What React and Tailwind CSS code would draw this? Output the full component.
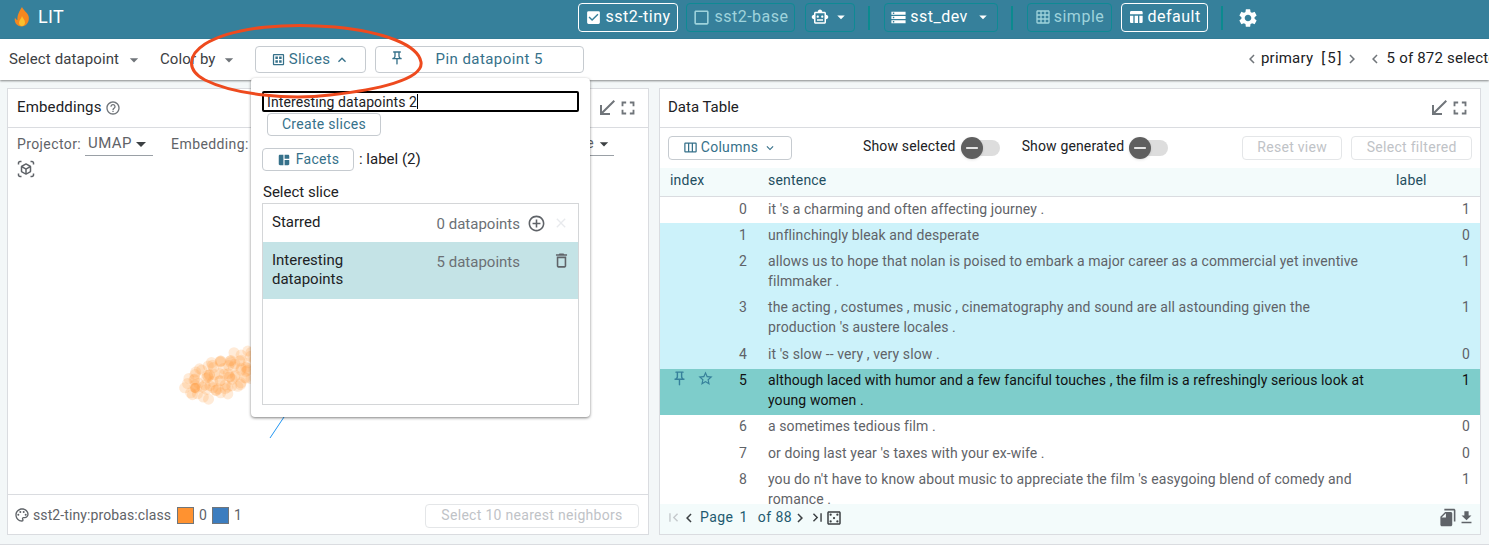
import {
  MdCheckBox, MdCheckBoxOutlineBlank, MdOutlineSmartToy, MdStorage, MdGridOn, MdTableChart, MdSettings,
  MdArrowDropDown, MdExpandLess, MdExpandMore, MdOutlineDataset, MdOutlinePushPin, MdSpaceDashboard,
  MdOutlineViewWeek, MdAddCircleOutline, MdOutlineDelete, MdClose, MdHelpOutline, MdSouthWest, MdFullscreen,
  MdOutlineViewInAr, MdOutlinePalette, MdOutlineCasino, MdFirstPage, MdLastPage, MdChevronLeft, MdChevronRight,
  MdFileCopy, MdFileDownload, MdStarBorder, MdRemove,
} from 'react-icons/md';

const rows = [
  { i: 0, text: "it 's a charming and often affecting journey .", label: 1, h: 'h-[26px] pt-[2px]', bg: 'bg-white' },
  { i: 1, text: 'unflinchingly bleak and desperate', label: 0, h: 'h-[26px] pt-[2px]', bg: 'bg-[#ccf2fa]' },
  { i: 2, text: 'allows us to hope that nolan is poised to embark a major career as a commercial yet inventive filmmaker .', label: 1, h: 'h-[46px] pt-[2px]', bg: 'bg-[#ccf2fa]' },
  { i: 3, text: "the acting , costumes , music , cinematography and sound are all astounding given the production 's austere locales .", label: 1, h: 'h-[47px] pt-[2px]', bg: 'bg-[#ccf2fa]' },
  { i: 4, text: "it 's slow -- very , very slow .", label: 0, h: 'h-[27px] pt-[2px]', bg: 'bg-[#ccf2fa]' },
  { i: 5, text: 'although laced with humor and a few fanciful touches , the film is a refreshingly serious look at young women .', label: 1, h: 'h-[46px] pt-px', bg: 'bg-[#7ecdcb]', primary: true },
  { i: 6, text: 'a sometimes tedious film .', label: 0, h: 'h-[27px] pt-px', bg: 'bg-white' },
  { i: 7, text: "or doing last year 's taxes with your ex-wife .", label: 0, h: 'h-[26px] pt-px', bg: 'bg-white' },
  { i: 8, text: "you do n't have to know about music to appreciate the film 's easygoing blend of comedy and romance .", label: 1, h: 'h-[46px] pt-px', bg: 'bg-white' },
];

// orange blob of the projection, fixed pseudo random points
const dots = Array.from({ length: 90 }, (_, n) => {
  const a = (n * 137.5 * Math.PI) / 180;
  const r = Math.sqrt((n + 1) / 90);
  const ex = Math.cos(a) * r * 40 + Math.sin(n * 3.1) * 3;
  const ey = Math.sin(a) * r * 19 + Math.sin(n * 7.3) * 3;
  return { x: 224 + ex, y: 375 + ey - ex * 0.3 };
});

function HeaderBtn({ active, className = '', children }) {
  return (
    <div className={`h-[29px] flex items-center justify-center rounded-[4px] border text-[16px] tracking-[0.5px] pb-px ${active ? 'border-white text-white' : 'border-[#0e8a94] text-[#9fd3dc]'} ${className}`}>
      {children}
    </div>
  );
}

function Sep({ className = '' }) {
  return <div className={`w-[2px] h-[24px] bg-[#0b8a8f] ${className}`} />;
}

function OutlineBtn({ className = '', children }) {
  return (
    <div className={`flex items-center justify-center rounded-[4px] border border-[#c6cbd0] bg-white text-[#36718a] tracking-[0.3px] ${className}`}>
      {children}
    </div>
  );
}

function DisabledBtn({ className = '', children }) {
  return (
    <div className={`h-[24px] flex items-center justify-center rounded-[4px] border border-[#e4e6e8] text-[14px] tracking-[0.3px] text-[#bfc3c7] pb-px ${className}`}>
      {children}
    </div>
  );
}

function Toggle({ className = '' }) {
  return (
    <div className={`relative w-[39px] h-[16px] rounded-full bg-[#dddddd] ${className}`}>
      <div className="absolute left-0 -top-[3px] w-[22px] h-[22px] rounded-full bg-[#5f5f5f] shadow flex items-center justify-center">
        <MdRemove className="text-white" size={20} />
      </div>
    </div>
  );
}

function PanelHeader({ children }) {
  return (
    <div className="h-[39px] shrink-0 flex items-center border-b border-[#dadce0] pl-[9px] pr-[9px] pb-px">
      {children}
      <div className="ml-auto flex items-center text-[#70757a]">
        <MdSouthWest size={24} />
        <MdFullscreen size={22} className="-ml-[2px]" />
      </div>
    </div>
  );
}

function SliceRow({ name, count, selected, className = '', children }) {
  return (
    <div className={`flex text-[15px] ${selected ? 'bg-[#c4e3e6]' : ''} ${className}`}>
      <div className="w-[120px] pl-[9px] pt-[9px] leading-[19px] text-[#202124]">{name}</div>
      <div className="w-[137px] text-right text-[#6b7075] pt-[11px] leading-[19px]">{count}</div>
      {children}
    </div>
  );
}

export default function App() {
  return (
    <div className="relative w-[1489px] h-[547px] overflow-hidden bg-white font-['Roboto',sans-serif] text-[14px] text-[#202124]">
      {/* Top bar */}
      <div className="h-[39px] bg-[#36809b] flex items-center">
        <div className="flex items-center w-[578px] pl-[13px] pb-[6px] text-white text-[18px] tracking-[0.3px]">
          <svg width="18" height="20" viewBox="0 0 18 20" className="mr-[7px]">
            <path d="M9 0c1 3 5 5 6.500 9 1.300 4-.8 10-6.500 10.500C3.500 19.500.8 15 2 10.500c.5 1.500 1.500 2.200 2.500 2.500C4 8 6.500 4 9 0z" fill="#f5871f" />
            <path d="M9 9c.5 2 3 3.500 3 6.500 0 2-1.300 3.500-3 3.500s-3.200-1.300-3-3.500C6.200 13 8.500 11.500 9 9z" fill="#fbc02d" />
          </svg>
          LIT
        </div>
        <div className="flex items-center pb-[4px]">
          <HeaderBtn active className="w-[100px] gap-[3px]"><MdCheckBox size={17} />sst2-tiny</HeaderBtn>
          <HeaderBtn className="w-[109px] ml-[8px] gap-[3px]"><MdCheckBoxOutlineBlank size={19} />sst2-base</HeaderBtn>
          <HeaderBtn className="w-[50px] ml-[10px] text-white gap-[3px]"><MdOutlineSmartToy size={18} className="text-white" /><MdArrowDropDown size={18} className="text-white" /></HeaderBtn>
          <Sep className="ml-[13px]" />
          <HeaderBtn className="w-[114px] ml-[14px] gap-[3px] !text-white"><MdStorage size={17} />sst_dev<MdArrowDropDown size={18} className="ml-[3px]" /></HeaderBtn>
          <Sep className="ml-[13px]" />
          <HeaderBtn className="w-[85px] ml-[14px] gap-[3px]"><MdGridOn size={16} />simple</HeaderBtn>
          <HeaderBtn active className="w-[87px] ml-[9px] gap-[3px]"><MdTableChart size={16} />default</HeaderBtn>
          <Sep className="ml-[13px]" />
          <MdSettings size={22} className="ml-[14px] text-white" />
        </div>
      </div>

      {/* Toolbar */}
      <div className="relative z-10 h-[41px] bg-white flex items-center shadow-[0_1px_2px_rgba(0,0,0,0.45)] text-[15px] tracking-[0.1px] text-[#3c4043] whitespace-nowrap">
        <div className="flex items-center w-[160px] pl-[9px] shrink-0">Select datapoint<MdArrowDropDown size={20} className="ml-[5px] text-[#70757a]" /></div>
        <div className="flex items-center w-[95px] shrink-0">Color by<MdArrowDropDown size={20} className="ml-[3px] text-[#70757a]" /></div>
        <OutlineBtn className="w-[111px] h-[27px] gap-[3px] text-[15px] shrink-0"><MdOutlineDataset size={15} />Slices<MdExpandLess size={16} className="ml-[1px]" /></OutlineBtn>
        <OutlineBtn className="w-[209px] h-[27px] ml-[9px] text-[15px] shrink-0">
          <MdOutlinePushPin size={16} className="ml-[13px] -mt-[4px]" />
          <span className="ml-auto mr-[40px] tracking-[0.45px]">Pin datapoint 5</span>
        </OutlineBtn>
        <div className="ml-[659px] flex items-center text-[#202124] text-[15px] tracking-[0.2px] -mt-[2px]">
          <MdChevronLeft size={18} className="text-[#70757a]" />
          <span>primary</span>
          <span className="ml-[8px] tracking-[2px]">[5]</span>
          <MdChevronRight size={18} className="-ml-[1px] text-[#70757a]" />
          <MdChevronLeft size={18} className="ml-[5px] text-[#70757a]" />
          <span className="ml-[3px]">5 of 872 selected</span>
        </div>
      </div>

      {/* Panels */}
      <div className="h-[465px] bg-[#f3f7f8] border-b border-[#dadce0] flex gap-[10px] pl-[7px] pt-[8px] pb-[9px]">
        <div className="w-[642px] bg-white border border-[#dadce0] flex flex-col">
          <PanelHeader>
            <span className="text-[15px] tracking-[0.15px]">Embeddings</span>
            <MdHelpOutline size={16} className="ml-[3px] mt-[1px] text-[#70757a]" />
          </PanelHeader>
          <div className="relative flex-1 min-h-0">
            <svg className="absolute left-0 top-0" width="640" height="367" viewBox="8 128 640 367">
              {dots.map((d, n) => <circle key={n} cx={d.x} cy={d.y} r="5.500" fill="#ff9a3c" fillOpacity="0.2" />)}
              <circle cx="195" cy="388" r="5" fill="#ff9a3c" fillOpacity="0.5" />
              <line x1="284" y1="417" x2="270" y2="438" stroke="#2196f3" strokeWidth="1" />
            </svg>
            <div className="relative flex items-center h-[32px] pl-[9px] text-[14px] tracking-[0.4px] text-[#5f6368]">
              <span>Projector:</span>
              <div className="ml-[4px] w-[68px] h-[24px] border-b border-[#9aa0a6] flex items-center pl-[3px] text-[15px]">UMAP<MdArrowDropDown size={24} className="-ml-[3px] text-[#3c4043]" /></div>
              <span className="ml-[18px]">Embedding:</span>
              <div className="ml-auto mr-[34px] w-[30px] h-[24px] border-b border-[#9aa0a6] flex items-center justify-end">e<MdArrowDropDown size={20} className="text-[#3c4043]" /></div>
            </div>
            <MdOutlineViewInAr size={18} className="relative ml-[9px] text-[#5f6368]" />
          </div>
          <div className="h-[40px] shrink-0 border-t border-[#dadce0] flex items-center pl-[6px] pr-[9px] pt-px text-[14px] tracking-[0.1px] text-[#5f6368]">
            <MdOutlinePalette size={16} />
            <span className="ml-[3px]">sst2-tiny:probas:class</span>
            <div className="ml-[6px] w-[17px] h-[17px] bg-[#ff9230] border border-[#70757a]" />
            <span className="ml-[5px]">0</span>
            <div className="ml-[5px] w-[17px] h-[17px] bg-[#3c7dbf] border border-[#70757a]" />
            <span className="ml-[5px]">1</span>
            <DisabledBtn className="ml-auto w-[214px] mt-px">Select 10 nearest neighbors</DisabledBtn>
          </div>
        </div>

        <div className="w-[822px] bg-white border border-[#dadce0] flex flex-col">
          <PanelHeader>
            <span className="text-[15px] -ml-px">Data Table</span>
          </PanelHeader>
          <div className="h-[40px] shrink-0 flex items-center pl-[8px] tracking-[0.15px]">
            <OutlineBtn className="w-[124px] h-[24px] gap-[3px] text-[14px] pb-px"><MdOutlineViewWeek size={15} />Columns<MdExpandMore size={14} className="ml-[2px]" /></OutlineBtn>
            <span className="ml-[71px] -mt-[3px]">Show selected</span>
            <Toggle className="ml-[5px]" />
            <span className="ml-[22px] -mt-[3px]">Show generated</span>
            <Toggle className="ml-[5px]" />
            <DisabledBtn className="ml-[74px] w-[100px]">Reset view</DisabledBtn>
            <DisabledBtn className="ml-[9px] w-[121px]">Select filtered</DisabledBtn>
          </div>
          <div className="h-[29px] shrink-0 bg-[#f3fbfb] border-b border-[#dadce0] flex items-center text-[#1f4e60] tracking-[0.2px] pb-[3px]">
            <span className="ml-[10px] w-[98px]">index</span>
            <span className="w-[628px]">sentence</span>
            <span>label</span>
          </div>
          <div className="flex-1 min-h-0 overflow-hidden">
            {rows.map((r) => (
              <div key={r.i} className={`flex ${r.h} ${r.bg} ${r.primary ? 'text-[#111111]' : 'text-[#5f6368]'} leading-[20px] tracking-[0.1px]`}>
                <div className="w-[87px] shrink-0 flex items-start justify-end relative">
                  {r.primary && (
                    <div className="absolute left-[11px] top-0 flex gap-[9px] text-[#36809b]">
                      <MdOutlinePushPin size={17} />
                      <MdStarBorder size={17} />
                    </div>
                  )}
                  {r.i}
                </div>
                <div className="w-[608px] ml-[21px] shrink-0">{r.text}</div>
                <div className="w-[94px] shrink-0 text-right">{r.label}</div>
              </div>
            ))}
          </div>
          <div className="h-[30px] shrink-0 bg-[#f3fbfb] flex items-center pl-[5px] pr-[5px] pb-[3px] text-[#1f5a70] text-[14px] tracking-[0.45px]">
            <MdFirstPage size={17} className="text-[#c5cacd]" />
            <MdChevronLeft size={18} className="-ml-[2px] text-[#3c4043]" />
            <span className="ml-[2px]">Page</span>
            <span className="ml-[6px]">1</span>
            <span className="ml-[10px]">of 88</span>
            <MdChevronRight size={18} className="-ml-px text-[#3c4043]" />
            <MdLastPage size={17} className="text-[#3c4043]" />
            <MdOutlineCasino size={18} className="-ml-px text-[#3c4043]" />
            <MdFileCopy size={19} className="ml-auto text-[#5f6368] scale-x-[-1]" />
            <MdFileDownload size={17} className="ml-[1px] text-[#5f6368]" />
          </div>
        </div>
      </div>

      {/* Slices popup */}
      <div className="absolute z-20 left-[251px] top-[78px] w-[339px] h-[339px] bg-white rounded-[4px] shadow-[0_1px_3px_rgba(0,0,0,0.5)] pl-[11px] pr-[11px] pt-[13px]">
        <div className="h-[21px] border-2 border-black rounded-[2px] flex items-center pl-[3px] text-[14px] tracking-[0.1px] text-[#202124] leading-none">
          Interesting datapoints 2<span className="w-px h-[15px] bg-black" />
        </div>
        <OutlineBtn className="ml-[5px] mt-px w-[114px] h-[23px] text-[14px]">Create slices</OutlineBtn>
        <div className="mt-[12px] flex items-center">
          <OutlineBtn className="w-[92px] h-[23px] gap-[5px] text-[14px]"><MdSpaceDashboard size={14} />Facets</OutlineBtn>
          <span className="ml-[5px] text-[15px]">: label (2)</span>
        </div>
        <div className="mt-[12px] pl-px leading-[18px] text-[15px]">Select slice</div>
        <div className="mt-[2px] h-[202px] border border-[#d4d6d8]">
          <SliceRow name="Starred" count="0 datapoints" className="h-[38px]">
            <MdAddCircleOutline size={19} className="mt-[10px] ml-[7px] text-[#5f6368]" />
            <MdClose size={16} className="mt-[11px] ml-[7px] text-[#e8eaed]" />
          </SliceRow>
          <SliceRow name="Interesting datapoints" count="5 datapoints" selected className="h-[57px]">
            <MdOutlineDelete size={19} className="mt-[9px] ml-[32px] text-[#5f6368]" />
          </SliceRow>
        </div>
      </div>

      {/* Red annotation drawn over the screenshot */}
      <svg className="absolute z-30 left-0 top-0 pointer-events-none" width="1489" height="547">
        <path d="M421 62C418 45 385 32 335 27C290 23 235 26 205 44C188 55 186 70 205 80C235 95 290 100 330 95C375 90 424 80 421 62Z" fill="none" stroke="#ee4a1e" strokeWidth="3" />
      </svg>
    </div>
  );
}
